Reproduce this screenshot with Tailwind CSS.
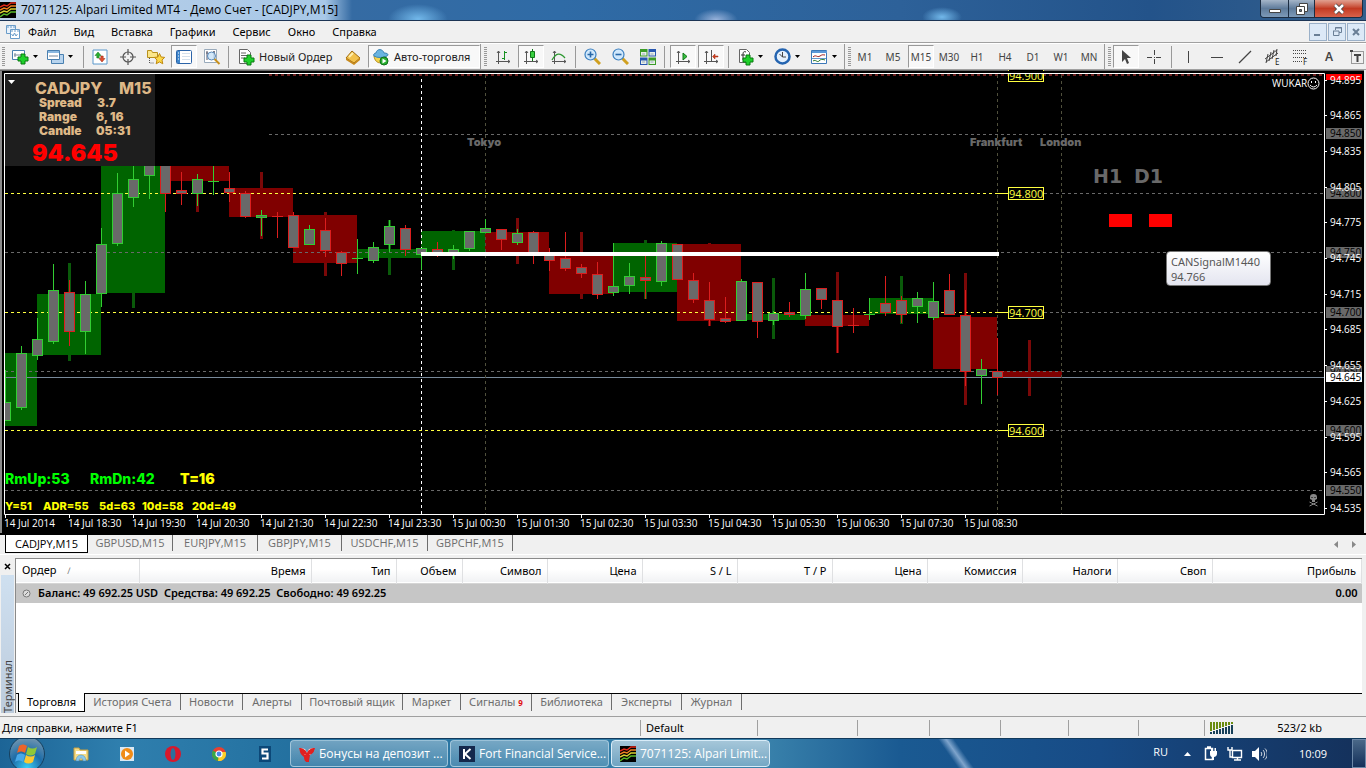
<!DOCTYPE html>
<html lang="ru">
<head>
    <meta charset="UTF-8">
    <meta name="viewport" content="width=device-width, initial-scale=1.0">
    <title>7071125: Alpari Limited MT4 - Демо Счет - [CADJPY,M15]</title>
    <script src="https://cdn.jsdelivr.net/npm/@tailwindcss/browser@4"></script>
</head>
<body class="h-screen flex flex-col overflow-hidden bg-[#f0f0f0] text-[11px] leading-4 text-black font-['Noto_Sans','Open_Sans',sans-serif]">

    <!-- Shared icons -->
    <svg class="hidden">
        <symbol id="plus" viewBox="0 0 12 12"><path d="M4 1h4v3h3v4H8v3H4V8H1V4h3z" fill="#1fd02b" stroke="#087a10"/></symbol>
        <symbol id="axes" viewBox="0 0 16 16"><path d="M3.500 2v13M1 12.500h14M2 4l1.500-2L5 4M13 11l2 1.500L13 14" fill="none" stroke="#555"/></symbol>
        <symbol id="logo" viewBox="0 0 16 16"><path d="M0 0h16v16H0z"/><path d="M0 5l4-2 3 1 4-3 5 0" stroke="#e02818" fill="none" stroke-width="1.500"/><path d="M0 8l4-2 3 1 4-3 5 0" stroke="#f08020" fill="none" stroke-width="1.500"/><path d="M0 11l4-2 3 1 4-3 5 0" stroke="#d8d030" fill="none" stroke-width="1.500"/><path d="M0 15l4-3 3 1 4-3 5 0" stroke="#58b828" fill="none" stroke-width="1.500"/></symbol>
    </svg>

    <!-- Title bar -->
    <header class="h-[21px] shrink-0 flex items-center border-b border-[#1c3454] bg-[radial-gradient(ellipse_at_center,#72b8ea_0,#72b8ea00_70%),radial-gradient(ellipse_at_center,#72b8ea_0,#72b8ea00_70%),radial-gradient(ellipse_at_center,#9ab4dc_0,#9ab4dc00_70%),linear-gradient(90deg,#b9cfe6_0,#a8c8e8_325px,#356ba3_352px,#2f6ba6_560px,#2d6199_900px,#23538a_1150px,#345f8c_100%)] bg-[size:60px_30px,40px_20px,44px_22px,100%_100%] bg-[position:388px_4px,922px_7px,694px_9px,0_0] bg-no-repeat">
        <svg class="size-4 shrink-0"><use href="#logo"/></svg>
        <h1 class="ml-[5px] text-[12px] whitespace-nowrap font-['Open_Sans','Noto_Sans',sans-serif]">7071125: Alpari Limited MT4 - Демо Счет - [CADJPY,M15]</h1>
        <div class="ml-auto mr-[3px] flex self-start h-[18px] border border-t-0 border-[#1b2c42] rounded-b-sm overflow-hidden">
            <button aria-label="Свернуть" class="w-7 flex justify-center items-center bg-linear-to-b from-[#a5b5c8] via-[#5f7b9b] to-[#7d9ab8] border-r border-[#1b2c42]"><svg class="w-3 h-3"><path d="M.5 6.500h11v3H.5z" fill="#fff" stroke="#444"/></svg></button>
            <button aria-label="Развернуть" class="w-[26px] flex justify-center items-center bg-linear-to-b from-[#a5b5c8] via-[#5f7b9b] to-[#7d9ab8] border-r border-[#1b2c42]"><svg class="w-3 h-3"><path d="M3.500.5h8v8h-8z" fill="#fff" stroke="#444"/><path d="M.5 3.500h8v8h-8z" fill="#fff" stroke="#444"/><path d="M3.500 6.500h2v2h-2z" fill="#678" stroke="#444"/></svg></button>
            <button aria-label="Закрыть" class="w-[47px] flex justify-center items-center bg-linear-to-b from-[#e0a090] via-[#c23a22] to-[#d8624a]"><svg class="w-3 h-3"><path d="M2 2l8 8M10 2l-8 8" stroke="#444" stroke-width="4"/><path d="M2 2l8 8M10 2l-8 8" stroke="#fff" stroke-width="2.500"/></svg></button>
        </div>
    </header>

    <!-- Menu -->
    <nav class="h-[22px] shrink-0 flex items-center pl-[5px] border-b border-[#a0a0a0]">
        <svg class="w-4 h-4"><path d="M1.500 1.500h9v8h-9z" fill="#e8f2fc" stroke="#6a9cc8"/><path d="M5.500 5.500h9v9h-9z" fill="#fff" stroke="#6a9cc8"/><path d="M2 3h8M6 7h8" stroke="#6a9cc8" stroke-dasharray="2 1"/><path d="M6.500 10l1.500 2 1.500-3 1.500 3 1.500-2" fill="none" stroke="#6a9cc8"/></svg>
        <div class="flex gap-[17px] pl-[7px]">
            <a href="#">Файл</a>
            <a href="#">Вид</a>
            <a href="#">Вставка</a>
            <a href="#">Графики</a>
            <a href="#">Сервис</a>
            <a href="#">Окно</a>
            <a href="#">Справка</a>
        </div>
        <div class="ml-auto mr-px flex gap-px">
            <button aria-label="Свернуть окно" class="size-[18px] border border-[#9ab0c8] bg-[#dce9f7]"><svg class="size-4"><path d="M4 10h6v2H4z" fill="#6a7f96"/></svg></button>
            <button aria-label="Восстановить окно" class="size-[18px] border border-[#9ab0c8] bg-[#dce9f7]"><svg class="size-4"><path d="M6.500 6V3.500h6v5H10M6 4h7M4 7h6v4.500H4.500V7" fill="none" stroke="#6a7f96"/></svg></button>
            <button aria-label="Закрыть окно" class="size-[18px] border border-[#9ab0c8] bg-[#dce9f7]"><svg class="size-4"><path d="M5 5l6 6M11 5l-6 6" stroke="#6a7f96" stroke-width="2"/></svg></button>
        </div>
    </nav>

    <!-- Toolbar -->
    <div class="h-[27px] shrink-0 flex items-center overflow-hidden pl-0.5 text-[#222] [&>*]:shrink-0 border-t border-white border-b border-b-[#a0a0a0]">
        <i class="w-[3px] h-[19px] bg-[repeating-linear-gradient(#999_0_1px,#f0f0f0_1px_2px)]"></i>
        <button aria-label="Новый график" class="w-[37px] flex items-center gap-1 pl-1.5"><svg class="w-[18px] h-[18px]"><path d="M1.500 2.500h12v9h-12z" fill="#fff" stroke="#4a80b0"/><path d="M3 7h8M4 5v4" stroke="#789"/><use href="#plus" x="6" y="5" width="12" height="12"/></svg><svg class="w-[5px] h-[3px]"><path d="M0 0h5L2.500 3z"/></svg></button>
        <button aria-label="Профили" class="w-[37px] flex items-center gap-1 pl-1"><svg class="w-[18px] h-[18px]"><path d="M5.500 6.500h12v9h-12z" fill="#b8d4ee" stroke="#4a80b0"/><path d="M1.500 2.500h12v9h-12z" fill="#fff" stroke="#4a80b0"/><path d="M2 4h11" stroke="#8ab8e0" stroke-width="2"/><path d="M3 8h9" stroke="#789"/></svg><svg class="w-[5px] h-[3px]"><path d="M0 0h5L2.500 3z"/></svg></button>
        <i class="w-px h-[22px] bg-[#999] ml-1 mr-0.5"></i>
        <button aria-label="Обзор рынка" class="w-7 flex justify-center"><svg class="size-4"><path d="M1 1h14v14H1z" fill="#fff" stroke="#5a98cc"/><path d="M6 3l3 3.500H7.200V9H4.800V6.500H3z" fill="#28b030" stroke="#187018" stroke-width=".5"/><path d="M10 13l3-3.500h-1.800V7H8.800v2.500H7z" fill="#e05030" stroke="#902010" stroke-width=".5"/></svg></button>
        <button aria-label="Окно данных" class="w-7 flex justify-center"><svg class="size-4"><circle cx="8" cy="8" r="5" fill="none" stroke="#555" stroke-width="1.200"/><path d="M8 0v6M8 10v6M0 8h6M10 8h6" stroke="#555" stroke-width="1.200"/></svg></button>
        <button aria-label="Навигатор" class="w-7 flex justify-center"><svg class="w-[18px] h-4"><path d="M.5 1.500h4l1 2h5v5H.5z" fill="#fbe68a" stroke="#b8901c"/><path d="M2.500 9v5h5" stroke="#555" stroke-dasharray="1 1" fill="none"/><path d="M12.500 4.500l1.600 3.500 3.600.4-2.700 2.600.8 3.800-3.300-1.900-3.300 1.900.8-3.800-2.700-2.600 3.600-.4z" fill="#fcd848" stroke="#c08a10"/></svg></button>
        <button aria-label="Терминал" class="w-[26px] mx-px h-[23px] flex justify-center items-center border border-[#999] border-r-white border-b-white bg-[#f8f8f8]"><svg class="size-4"><rect x=".5" y="1.500" width="15" height="13" rx="1" fill="#fff" stroke="#2c64a8"/><path d="M1 2h3v12H1z" fill="#3f86cc"/><path d="M6 4.500h8M6 7.500h8M6 10.500h8" stroke="#d4e0ec"/><path d="M2 4h1M2 7h1M2 10h1" stroke="#fff"/></svg></button>
        <button aria-label="Тестер" class="w-7 flex justify-center"><svg class="w-[18px] h-[18px]"><path d="M1.500 1.500h12v13h-12z" fill="#fff" stroke="#9ab"/><path d="M4 3v9M11 3v7M3 5h2M10 4h2" stroke="#556"/><circle cx="8.500" cy="8" r="4" fill="#c8e2f8cc" stroke="#5888b8"/><path d="M11.500 11l5 5" stroke="#c8901c" stroke-width="2"/></svg></button>
        <i class="w-px h-[22px] bg-[#999] ml-0.5 mr-2"></i>
        <button class="flex items-center gap-1 w-[103px] whitespace-nowrap"><svg class="w-[18px] h-[18px] shrink-0"><path d="M2.500 1.500h8l3 3v11h-11z" fill="#fff" stroke="#666"/><path d="M4 5h5M4 7.500h7M4 10h4" stroke="#666"/><use href="#plus" x="6" y="6" width="12" height="12"/></svg>Новый Ордер</button>
        <button aria-label="MetaEditor" class="w-[26px] flex justify-center"><svg class="size-4"><path d="M1 9l6-7 8 7-6 5z" fill="#f2c24c" stroke="#a06c10"/><path d="M1 9l8 5v2l-8-5zM9 14l6-5v2l-6 5z" fill="#c88a1c"/><path d="M4 8l4-4" stroke="#fff0b0" stroke-width="2"/></svg></button>
        <button class="ml-0.5 w-[112px] h-[23px] flex items-center gap-1 pl-0.5 whitespace-nowrap border border-[#999] border-r-white border-b-white bg-[#f8f8f8]"><svg class="w-[19px] h-[18px] shrink-0"><path d="M3 8c1 8 9 10 12 0z" fill="#f4d44c" stroke="#b08818"/><path d="M5 5c1-5 7-4 8 0 4 0 5 2 3 3-4 2-10 2-13 0-1-1 0-3 2-3z" fill="#6ab4e0" stroke="#3c84b4"/><circle cx="13" cy="13" r="4" fill="#28b030" stroke="#107018"/><path d="M11.500 10.500v5l4-2.500z" fill="#fff"/></svg>Авто-торговля</button>
        <i class="w-px h-[25px] bg-[#999] mr-[3px]"></i>
        <i class="w-[3px] h-[19px] bg-[repeating-linear-gradient(#999_0_1px,#f0f0f0_1px_2px)]"></i>
        <button aria-label="Бары" class="ml-0.5 w-7 flex justify-center"><svg class="size-4"><use href="#axes"/><path d="M9.500 2v9M9 3.500h3M7 9.500h3" stroke="#169020" fill="none"/></svg></button>
        <button aria-label="Свечи" class="w-[26px] mx-px h-[23px] flex justify-center items-center border border-[#999] border-r-white border-b-white bg-[#f8f8f8]"><svg class="size-4"><use href="#axes"/><path d="M9.500 0v12" stroke="#107818"/><path d="M7.500 2.500h4v6h-4z" fill="#38d040" stroke="#107818"/></svg></button>
        <button aria-label="Линия" class="w-7 flex justify-center"><svg class="size-4"><use href="#axes"/><path d="M1 11C5 4 9 3 14 9" stroke="#2c9830" stroke-width="1.300" fill="none"/></svg></button>
        <i class="w-px h-[22px] bg-[#999] mx-0.5"></i>
        <button aria-label="Увеличить" class="w-7 flex justify-center"><svg class="w-[17px] h-[17px]"><path d="M10 10l6 6" stroke="#d0a020" stroke-width="3"/><circle cx="6.500" cy="6.500" r="5.500" fill="#d0e8fc" stroke="#3c80c0" stroke-width="1.200"/><path d="M3.500 6.500h6M6.500 3.500v6" stroke="#2868a8" stroke-width="1.600"/></svg></button>
        <button aria-label="Уменьшить" class="w-7 flex justify-center"><svg class="w-[17px] h-[17px]"><path d="M10 10l6 6" stroke="#d0a020" stroke-width="3"/><circle cx="6.500" cy="6.500" r="5.500" fill="#d0e8fc" stroke="#3c80c0" stroke-width="1.200"/><path d="M3.500 6.500h6" stroke="#2868a8" stroke-width="1.600"/></svg></button>
        <button aria-label="Окна" class="w-7 flex justify-center"><svg class="size-4"><path d="M0 0h7.500v7.500H0zM8.500 8.500H16V16H8.500z" fill="#3c9c28"/><path d="M8.500 0H16v7.500H8.500zM0 8.500h7.500V16H0z" fill="#2858b0"/><path d="M1 3h5.500v3.500H1zM9.500 3H15v3.500H9.500zM1 11.500h5.500V15H1zM9.500 11.500H15V15H9.500z" fill="#e8f0e8"/><path d="M2 5h3M10.500 5h3M2 13h3M10.500 13h3" stroke="#9ab"/></svg></button>
        <i class="w-px h-[22px] bg-[#999] ml-0.5 mr-1"></i>
        <button aria-label="Автопрокрутка" class="w-[26px] mx-px h-[23px] flex justify-center items-center border border-[#999] border-r-white border-b-white bg-[#f8f8f8]"><svg class="size-4"><use href="#axes"/><path d="M8 4v7l4-3.500z" fill="#38c040" stroke="#107818"/></svg></button>
        <button aria-label="Сдвиг графика" class="w-[26px] mx-px h-[23px] flex justify-center items-center border border-[#999] border-r-white border-b-white bg-[#f8f8f8]"><svg class="size-4"><use href="#axes"/><path d="M8.500 1v11" stroke="#555"/><path d="M9.500 7.500L12 5v2h3v1h-3v2z" fill="#d04020" stroke="#a02810" stroke-width=".5"/></svg></button>
        <i class="w-px h-[22px] bg-[#999] ml-[3px] mr-1"></i>
        <button aria-label="Индикаторы" class="w-[37px] flex items-center gap-1 pl-1"><svg class="w-[17px] h-[18px]"><path d="M2.500 1.500h7l3 3v10h-10z" fill="#fff" stroke="#666"/><path d="M9 4c-2-1-3 0-3 2v6M4 7h4" stroke="#333" fill="none"/><use href="#plus" x="5" y="6" width="12" height="12"/></svg><svg class="w-[5px] h-[3px]"><path d="M0 0h5L2.500 3z"/></svg></button>
        <button aria-label="Периоды" class="w-[37px] flex items-center gap-1 pl-1"><svg class="w-[17px] h-[17px]"><circle cx="8.500" cy="8.500" r="7" fill="#e4f0fc" stroke="#2464b0" stroke-width="2.500"/><path d="M8.500 4v5h3.500M8.500 9l-3-3" stroke="#444" fill="none"/></svg><svg class="w-[5px] h-[3px]"><path d="M0 0h5L2.500 3z"/></svg></button>
        <button aria-label="Шаблоны" class="w-[37px] flex items-center gap-1 pl-1"><svg class="w-[17px] h-4"><path d="M.5 1.500h15v13H.5z" fill="#fff" stroke="#3c78b8"/><path d="M1 3h15" stroke="#5a98d8" stroke-width="2"/><path d="M2 8c3-3 4 1 7-1s3-1 5-1" stroke="#a02020" fill="none"/><path d="M2 12c3-2 4 2 6 0s3-2 6-1" stroke="#287828" fill="none"/><path d="M1 9.500h14" stroke="#69c"/></svg><svg class="w-[5px] h-[3px]"><path d="M0 0h5L2.500 3z"/></svg></button>
        <i class="w-px h-[25px] bg-[#999] mr-[3px]"></i>
        <i class="w-[3px] h-[19px] bg-[repeating-linear-gradient(#999_0_1px,#f0f0f0_1px_2px)]"></i>
        <div class="flex items-center text-[10px] text-[#444]">
            <button class="w-7">M1</button>
            <button class="w-7">M5</button>
            <button class="w-[26px] mx-px h-[23px] border border-[#999] border-r-white border-b-white bg-[#f8f8f8]">M15</button>
            <button class="w-7">M30</button>
            <button class="w-7">H1</button>
            <button class="w-7">H4</button>
            <button class="w-7">D1</button>
            <button class="w-7">W1</button>
            <button class="w-7">MN</button>
        </div>
        <i class="w-px h-[25px] bg-[#999] ml-px mr-[3px]"></i>
        <i class="w-[3px] h-[19px] bg-[repeating-linear-gradient(#999_0_1px,#f0f0f0_1px_2px)]"></i>
        <button aria-label="Курсор" class="w-[26px] ml-0.5 mr-px h-[23px] flex justify-center items-center border border-[#999] border-r-white border-b-white bg-[#f8f8f8]"><svg class="w-3 h-4"><path d="M2 1v12l3-3 2 5 2-1-2-5h4z" fill="#444"/></svg></button>
        <button aria-label="Перекрестие" class="w-7 flex justify-center"><svg class="size-4"><path d="M8.500 1v5M8.500 10v5M1 8.500h5M10 8.500h5" stroke="#444"/><path d="M8 8h1v1H8z" fill="#444"/></svg></button>
        <i class="w-px h-[22px] bg-[#999] mx-[3px]"></i>
        <button aria-label="Вертикальная линия" class="w-7 flex justify-center"><svg class="size-4"><path d="M7.500 2v12" stroke="#444"/></svg></button>
        <button aria-label="Горизонтальная линия" class="w-7 flex justify-center"><svg class="size-4"><path d="M2 8.500h12" stroke="#444"/></svg></button>
        <button aria-label="Трендовая линия" class="w-7 flex justify-center"><svg class="size-4"><path d="M2 14L14 2" stroke="#444" stroke-width="1.200"/></svg></button>
        <button aria-label="Каналы" class="w-7 flex justify-center"><svg class="w-[18px] h-[18px]"><path d="M1 11L13 2M2 14l12-9M4 6l-2 9M7 4L5 13M10 2l-2 9M13 1l-1 7" stroke="#444" fill="none"/><text x="11" y="17" font-size="8" fill="#222">E</text></svg></button>
        <button aria-label="Фибоначчи" class="w-7 flex justify-center"><svg class="w-[18px] h-[18px]"><path d="M1 2.500h14M1 5.500h14M1 9.500h14M1 13.500h9" stroke="#444" stroke-dasharray="1 1"/><text x="11" y="17" font-size="8" fill="#222">F</text></svg></button>
        <button aria-label="Текст" class="w-7 text-[12px] font-semibold text-[#444]">A</button>
        <button aria-label="Метка" class="w-7 flex justify-center"><svg class="size-4"><path d="M2.500 2.500h12v12h-12z" fill="none" stroke="#444" stroke-dasharray="1 1"/><path d="M1 1h3v2H1zM5 5h7v2H9.500v6h-2V7H5z" fill="#444"/></svg></button>
    </div>

    <!-- Chart -->
    <main class="relative shrink-0 bg-black">
        <svg id="chart" class="block w-full h-auto" viewBox="0 70 1366 463" font-family="'Open Sans','Noto Sans',sans-serif" font-size="10"></svg>
        <div class="absolute top-[181px] right-[95px] w-[105px] h-[35px] pl-1 pt-0.5 rounded-sm border border-[#767676] bg-linear-to-b from-white to-[#e4e5f0] text-[11px] leading-[15px] text-[#575757]">
            <p>CANSignalM1440</p>
            <p>94.766</p>
        </div>
    </main>

    <!-- Chart tabs -->
    <div class="h-[22px] shrink-0 flex items-start pl-[5px] pr-2 border-t-2 border-black text-[#6d6d6d] border-b border-b-white font-['Open_Sans','Noto_Sans',sans-serif]">
        <button class="w-[83px] h-[18px] bg-white text-black border border-t-0 border-black">CADJPY,M15</button>
        <button class="w-[85px] h-4 border-r border-[#6d6d6d]">GBPUSD,M15</button>
        <button class="w-[85px] h-4 border-r border-[#6d6d6d]">EURJPY,M15</button>
        <button class="w-[84px] h-4 border-r border-[#6d6d6d]">GBPJPY,M15</button>
        <button class="w-[86px] h-4 border-r border-[#6d6d6d]">USDCHF,M15</button>
        <button class="w-[85px] h-4 border-r border-[#6d6d6d]">GBPCHF,M15</button>
        <div class="ml-auto flex gap-3 pt-1.5">
            <button aria-label="Назад"><svg class="w-1.5 h-2"><path d="M4 0v7L0 3.500z" fill="#888"/></svg></button>
            <button aria-label="Вперед"><svg class="w-1.5 h-2"><path d="M0 0v7l4-3.500z" fill="#888"/></svg></button>
        </div>
    </div>

    <!-- Terminal -->
    <section class="flex-1 min-h-0 flex pt-[3px] pb-[3px]">
        <aside class="w-[15px] flex flex-col items-center">
            <button aria-label="Закрыть терминал" class="h-[17px]"><svg class="w-[7px] h-[7px]"><path d="M1 1l5 5M6 1L1 6" stroke="#000" stroke-width="1.500"/></svg></button>
            <div class="flex-1 w-[13px] flex items-start bg-linear-to-b from-[#bccbdc] to-[#cfe0f0] text-[#444] [writing-mode:vertical-rl] rotate-180 leading-[13px]">Терминал</div>
        </aside>
        <div class="flex-1 flex flex-col min-w-0 border-l border-t border-[#8a8a8a] mr-1">
            <div class="flex-1 bg-white border-b border-black">
                <table class="w-full table-fixed">
                    <colgroup>
                        <col class="w-[123px]"><col class="w-[172px]"><col class="w-[85px]"><col class="w-[66px]"><col class="w-[85px]"><col class="w-[95px]"><col class="w-[95px]"><col class="w-[95px]"><col class="w-[95px]"><col class="w-[95px]"><col class="w-[95px]"><col class="w-[95px]"><col>
                    </colgroup>
                    <thead>
                        <tr class="h-6 text-right bg-linear-to-b from-white from-45% to-[#f1f2f4] [&>th]:font-normal [&>th]:pr-[5px] [&>th]:border-r [&>th]:border-[#dfe0e2] border-b border-[#d5d5d5]">
                            <th class="text-left pl-1.5">Ордер <span class="ml-2 text-[#777] text-[9px]">∕</span></th>
                            <th>Время</th>
                            <th>Тип</th>
                            <th>Объем</th>
                            <th>Символ</th>
                            <th>Цена</th>
                            <th>S / L</th>
                            <th>T / P</th>
                            <th>Цена</th>
                            <th>Комиссия</th>
                            <th>Налоги</th>
                            <th>Своп</th>
                            <th>Прибыль</th>
                        </tr>
                    </thead>
                    <tbody>
                        <tr class="h-5 bg-[#c6c6c6] font-semibold">
                            <td colspan="12" class="pl-1.5"><span class="flex items-center gap-[7px] whitespace-pre"><svg class="size-[9px]"><circle cx="4.500" cy="4.500" r="3.500" fill="#ddd" stroke="#777"/><path d="M3 6l3-3" stroke="#777"/></svg>Баланс: 49 692.25 USD  Средства: 49 692.25  Свободно: 49 692.25</span></td>
                            <td class="text-right pr-1">0.00</td>
                        </tr>
                    </tbody>
                </table>
            </div>
            <div class="h-[19px] shrink-0 flex items-start pl-0.5 text-[#6d6d6d] [&>button]:whitespace-nowrap">
                <button class="-mt-px w-[67px] h-[19px] bg-white text-black border border-t-0 border-black">Торговля</button>
                <button class="w-24 border-r border-[#6d6d6d]">История Счета</button>
                <button class="w-[62px] border-r border-[#6d6d6d]">Новости</button>
                <button class="w-[59px] border-r border-[#6d6d6d]">Алерты</button>
                <button class="w-[101px] border-r border-[#6d6d6d]">Почтовый ящик</button>
                <button class="w-[58px] border-r border-[#6d6d6d]">Маркет</button>
                <button class="w-[71px] border-r border-[#6d6d6d]">Сигналы <b class="text-[8px] text-[#e01010]">9</b></button>
                <button class="w-20 border-r border-[#6d6d6d]">Библиотека</button>
                <button class="w-[70px] border-r border-[#6d6d6d]">Эксперты</button>
                <button class="w-[60px] border-r border-[#6d6d6d]">Журнал</button>
            </div>
        </div>
    </section>

    <!-- Status bar -->
    <footer class="h-[22px] shrink-0 flex items-center border-t border-[#a0a0a0] [&>*]:h-4 [&>*]:border-r [&>*]:border-[#a0a0a0]">
        <span class="flex-1 pl-0.5">Для справки, нажмите F1</span>
        <span class="w-[117px] pl-[5px]">Default</span>
        <span class="w-[100px]"></span>
        <span class="w-[72px]"></span>
        <span class="w-[71px]"></span>
        <span class="w-[68px]"></span>
        <span class="w-[70px]"></span>
        <span class="w-[66px]"></span>
        <div class="w-[161px] flex items-center pl-[5px] !border-r-0">
            <svg class="w-6 h-3"><path d="M1 0v9M4 0v8M7 0v7M10 0v6M13 0v5M16 0v4M19 0v3M22 0v2" stroke="#6a8c10" stroke-width="2"/><path d="M1 10v2M4 9v3M7 8v4M10 7v5M13 6v6M16 5v7M19 4v8M22 3v9" stroke="#184058" stroke-width="2"/></svg>
            <span class="ml-auto mr-11">523/2 kb</span>
        </div>
    </footer>

    <!-- Taskbar -->
    <div class="h-[30px] shrink-0 flex items-center overflow-hidden border-t border-[#123a5c] text-white bg-[linear-gradient(55deg,transparent_40%,#7ea4cc_50%,transparent_60%),linear-gradient(90deg,#1c6496_0,#2f7fae_120px,#23709f_300px,#3a83ac_760px,#1a5a92_900px,#174b86_1100px,#14305a_100%)] bg-[size:60px_100%,100%_100%] bg-[position:926px_0,0_0] bg-no-repeat font-['Open_Sans','Noto_Sans',sans-serif]">
        <button aria-label="Пуск" class="ml-2 w-[38px] shrink-0"><svg class="w-[38px] h-[38px]" viewBox="0 0 38 38"><defs><radialGradient id="orb" cx=".5" cy=".9" r=".9"><stop offset="0" stop-color="#38d0f8"/><stop offset=".5" stop-color="#1c6ca8"/><stop offset="1" stop-color="#7898b0"/></radialGradient></defs><circle cx="19" cy="19" r="17.500" fill="url(#orb)" stroke="#16405e"/><path d="M11 11c3-2 5-2 8 0l-2 7c-3-2-5-2-8 0z" fill="#ee6428"/><path d="M20 12c3 2 6 2 9 0l-2 7c-3 2-6 2-9 0z" fill="#90c838"/><path d="M9 20c3-2 5-2 8 0l-2 7c-3-2-5-2-8 0z" fill="#48a8e8"/><path d="M18 20c3 2 6 2 9 0l-2 7c-3 2-6 2-9 0z" fill="#fcc830"/></svg></button>
        <div class="flex ml-[27px] gap-[30px] shrink-0">
            <button aria-label="Проводник"><svg class="size-4"><path d="M1 2h5l1 2h8v10H1z" fill="#f4dc88" stroke="#c8a040"/><path d="M3 5h10v3H3z" fill="#fff"/><path d="M3 15c0-8 10-8 10 0h-3c0-4-4-4-4 0z" fill="#8cc8ec" stroke="#4888b0" stroke-width=".5"/></svg></button>
            <button aria-label="Проигрыватель"><svg class="size-4"><path d="M1 1h14v14H1z" fill="#d8e8f4"/><circle cx="8" cy="8" r="6" fill="#f08c18"/><path d="M6 4.500v7l5-3.500z" fill="#fff"/></svg></button>
            <button aria-label="Opera"><svg class="size-4"><ellipse cx="8" cy="8" rx="8" ry="8" fill="#d8182c"/><ellipse cx="8" cy="8" rx="2.500" ry="6" fill="#2a709c"/></svg></button>
            <button aria-label="Chrome"><svg class="size-4"><circle cx="8" cy="8" r="7" fill="#e84030"/><path d="M8 8L2 4.500A7 7 0 0 0 7 15z" fill="#38a848"/><path d="M8 8h0l-1 7a7 7 0 0 0 7.700-9H8z" fill="#fcd028"/><circle cx="8" cy="8" r="3" fill="#4888e8" stroke="#fff" stroke-width="1.200"/></svg></button>
            <button aria-label="S"><svg class="size-4"><path d="M2 0h12v16H2z" fill="#0c4878"/><path d="M11 3.500H5.500v4h5v5H5" fill="none" stroke="#fff" stroke-width="2.200"/></svg></button>
        </div>
        <div class="flex gap-0.5 ml-[17px] text-[12px] [&>button]:shrink-0">
            <button class="w-[158px] h-[27px] flex items-center gap-1 pl-2 whitespace-nowrap rounded-sm border border-[#bcd8e8]/70 bg-linear-to-b from-white/35 to-white/15"><svg class="size-4"><path d="M1 3l5 1 2 4 2-5 5-1c1 3-1 6-4 7l-1 6c-3 2-5 0-5-4C2 9 0 6 1 3z" fill="#e02020"/><path d="M1 2l5 1 2 4 2-4 5-1-4 7H6z" fill="#fff"/><path d="M0 2c4 0 7 2 8 5 1-3 4-5 8-5-1 4-4 6-6 7v7H7V9C4 8 1 6 0 2z" fill="#e02020"/></svg>Бонусы на депозит ...</button>
            <button class="w-[159px] h-[27px] flex items-center gap-1 pl-2 whitespace-nowrap rounded-sm border border-[#bcd8e8]/70 bg-linear-to-b from-white/35 to-white/15"><svg class="size-4"><path d="M0 0h16v16H0z" fill="#14284c"/><path d="M5 3v10M11.500 3L6 8l5.500 5" stroke="#fff" stroke-width="2" fill="none"/></svg>Fort Financial Service...</button>
            <button class="w-[159px] h-[27px] flex items-center gap-1 pl-2 whitespace-nowrap rounded-sm border border-[#d8ecf8] bg-linear-to-b from-white/55 to-white/30"><svg class="size-4"><use href="#logo"/></svg>7071125: Alpari Limit...</button>
        </div>
        <div class="ml-auto flex items-center shrink-0 self-stretch">
            <span class="mr-4 mb-1 text-[11px]">RU</span>
            <svg class="w-[7px] h-1 mr-3"><path d="M0 4h7L3.500 0z" fill="#fff"/></svg>
            <svg class="size-4 mr-2"><path d="M2.500 2.500h7v11h-7zM4 1h4" fill="none" stroke="#fff" stroke-width="1.500"/><path d="M7 5h7v3c0 2-2 3-3 3v3H9v-3c-1 0-2-1-2-3zM8 2h1.500v3H8zM11.500 2H13v3h-1.500z" fill="#fff"/></svg>
            <svg class="size-4 mr-2"><path d="M5.500 4.500h9v7h-9zM7 14h7M10.500 12v2M1 1v3h4V1M3 4v7h2" fill="none" stroke="#fff" stroke-width="1.400"/></svg>
            <svg class="size-4 mr-8"><path d="M1 5h3l4-4v14l-4-4H1z" fill="#fff"/><path d="M10 6c1 1 1 3 0 4M12 4c2 2 2 6 0 8M14 2.500c3 3 3 8 0 11" stroke="#fff" fill="none" stroke-width=".8"/></svg>
            <time class="text-[11px] mr-[25px]">10:09</time>
            <i class="w-3.5 self-stretch border border-[#6c88a8] bg-linear-to-b from-[#4a6888] to-[#14305a]"></i>
        </div>
    </div>

    <script>
        const svg = document.getElementById('chart');

        function add(tag, attrs, text) {
            const el = document.createElementNS('http://www.w3.org/2000/svg', tag);
            for (const key in attrs) el.setAttribute(key, attrs[key]);
            if (text) el.textContent = text;
            svg.appendChild(el);
            return el;
        }
        function rect(x1, y1, x2, y2, fill) {
            add('rect', { x: x1, y: y1, width: x2 - x1, height: y2 - y1, fill });
        }
        function line(x1, y1, x2, y2, stroke, dash) {
            const attrs = { x1, y1, x2, y2, stroke };
            if (dash) attrs['stroke-dasharray'] = '3 3';
            add('line', attrs);
        }
        function label(x, y, text, fill, size, family, weight) {
            const attrs = { x, y, fill };
            if (size) attrs['font-size'] = size;
            if (family) attrs['font-family'] = family;
            if (weight) attrs['font-weight'] = weight;
            add('text', attrs, text);
        }

        const GREEN = '#32cd32', RED = '#dc1e1e', DARK_GREEN = '#006400', DARK_RED = '#800000';
        const BLACK_FONT = 'Inter, sans-serif';

        // pane background
        rect(0, 70, 1366, 533, '#000');
        rect(0, 70, 2, 533, '#8a8a8a');
        rect(0, 70, 1366, 71, '#696969');
        rect(1364, 70, 1366, 533, '#e8e8e8');

        // hourly blocks: x1, top, x2, bottom, direction
        const hours = [
            [5, 353, 37, 426, 1], [37, 294, 101, 355, 1], [101, 166, 165, 293, 1], [165, 166, 229, 181, 0],
            [229, 188, 293, 217, 0], [293, 215, 357, 263, 0], [357, 249, 421, 258, 1], [421, 231, 485, 255, 1],
            [485, 232, 549, 253, 0], [549, 253, 613, 294, 0], [613, 243, 677, 292, 1], [677, 244, 741, 321, 0],
            [741, 314, 805, 320, 1], [805, 315, 869, 326, 0], [869, 298, 933, 314, 1], [933, 317, 997, 369, 0],
            [997, 371, 1062, 378, 0]
        ];
        // hourly shadows: x, high, low, direction
        const shadows = [
            [69, 263, 361, 1], [133, 170, 308, 1], [197, 170, 212, 0], [261, 172, 239, 0], [325, 212, 276, 0],
            [389, 220, 275, 1], [453, 230, 270, 1], [517, 218, 264, 0], [581, 232, 299, 0], [645, 240, 299, 1],
            [709, 243, 326, 0], [773, 278, 339, 1], [837, 272, 353, 0], [901, 276, 324, 1], [965, 273, 405, 0],
            [1029, 340, 396, 0]
        ];
        shadows.forEach(([x, hi, lo, up]) => rect(x - 1, hi, x + 2, lo, up ? '#0a5a0a' : '#7a0808'));
        hours.forEach(([x1, y1, x2, y2, up]) => rect(x1, y1, x2, y2, up ? DARK_GREEN : DARK_RED));

        // price grid
        line(269, 75, 1324, 75, '#dc4040', true);
        line(269, 134.5, 1324, 134.5, '#696969', true);
        [252.5, 371.5, 490.5].forEach(y => line(5, y, 1324, y, '#696969', true));
        [193.5, 312.5, 430.5].forEach(y => {
            line(1044, y, 1324, y, '#696969', true);
            line(5, y, 997, y, '#ffff40', true);
            line(997, y, 1008, y, '#ffff40');
        });
        line(5, 377.5, 1324, 377.5, '#778899');

        // session separators
        line(421.5, 79, 421.5, 514, '#fff', true);
        [485.5, 997.5, 1061.5].forEach(x => line(x, 75, x, 514, '#50503c', true));

        // 15 minute candles, one every 16px: high, body top, body bottom, low, direction
        const candles = [
            [370, 402, 420, 421, 1], [346, 353, 407, 410, 1], [318, 339, 355, 360, 1], [264, 290, 341, 344, 1],
            [280, 292, 331, 346, 0], [281, 294, 331, 354, 1], [228, 244, 293, 307, 1], [173, 193, 243, 246, 1],
            [160, 179, 197, 207, 1], [166, 165, 175, 199, 1], [166, 165, 193, 212, 0], [172, 190, 193, 205, 0],
            [174, 179, 193, 206, 1], [166, 181, 181, 195, 1], [172, 188, 192, 202, 0], [191, 193, 216, 218, 0],
            [210, 215, 217, 236, 1], [212, 216, 217, 238, 0], [212, 215, 247, 248, 0], [225, 229, 244, 245, 1],
            [218, 230, 250, 257, 0], [251, 252, 263, 276, 0], [239, 258, 258, 274, 1], [242, 247, 260, 263, 1],
            [220, 226, 244, 252, 1], [225, 228, 249, 256, 0], [248, 248, 254, 270, 1], [242, 249, 253, 257, 0],
            [245, 249, 253, 259, 1], [231, 231, 248, 251, 1], [219, 228, 232, 233, 1], [229, 229, 239, 250, 0],
            [229, 233, 242, 245, 1], [231, 232, 253, 264, 0], [248, 253, 260, 271, 0], [232, 258, 268, 271, 0],
            [264, 267, 273, 278, 0], [262, 274, 294, 299, 0], [243, 286, 292, 296, 1], [263, 276, 285, 294, 1],
            [256, 277, 280, 299, 0], [241, 243, 281, 286, 1], [244, 244, 279, 280, 0], [273, 280, 299, 303, 0],
            [282, 300, 319, 326, 0], [297, 318, 321, 323, 0], [279, 281, 320, 321, 1], [282, 282, 321, 338, 0],
            [311, 313, 320, 325, 1], [302, 312, 314, 317, 0], [273, 289, 315, 319, 1], [288, 288, 299, 309, 0],
            [300, 300, 326, 353, 0], [308, 325, 326, 333, 0], [298, 314, 314, 320, 1], [276, 303, 312, 316, 0],
            [296, 300, 314, 323, 0], [292, 298, 306, 323, 1], [282, 301, 317, 320, 1], [274, 290, 314, 315, 0],
            [290, 315, 371, 386, 0], [359, 369, 375, 404, 1], [338, 371, 377, 395, 0]
        ];
        candles.forEach(([hi, top, bottom, lo, up], i) => {
            const x = 5.5 + i * 16;
            const color = up ? GREEN : RED;
            line(x, hi, x, lo, color);
            if (bottom - top < 2) {
                line(x - 5.5, top + .5, x + 5.5, top + .5, color);
            } else {
                add('rect', { x: x - 5, y: top + .5, width: 10, height: bottom - top, fill: '#696969', stroke: color });
            }
        });

        rect(421, 252, 999, 256, '#fff');

        // info panel
        rect(155, 150, 240, 166, '#000');
        rect(5, 74, 155, 166, '#1e1e1e');
        add('path', { d: 'M8 80h7l-3.500 4z', fill: '#fff' });
        label(35, 94, 'CADJPY', '#deb887', 16, BLACK_FONT, 800);
        label(119, 94, 'M15', '#deb887', 16, BLACK_FONT, 800);
        label(39, 107, 'Spread', '#deb887', 12, BLACK_FONT, 900);
        label(97, 107, '3.7', '#deb887', 12, BLACK_FONT, 900);
        label(39, 121, 'Range', '#deb887', 12, BLACK_FONT, 900);
        label(96, 121, '6, 16', '#deb887', 12, BLACK_FONT, 900);
        label(39, 135, 'Candle', '#deb887', 12, BLACK_FONT, 900);
        label(96, 135, '05:31', '#deb887', 12, BLACK_FONT, 900);
        label(32, 161, '94.645', '#f00', 23, BLACK_FONT, 900);

        label(5, 484, 'RmUp:53', '#0f0', 14, BLACK_FONT, 800);
        label(90, 484, 'RmDn:42', '#0f0', 14, BLACK_FONT, 800);
        label(180, 484, 'T=16', '#ff0', 14, BLACK_FONT, 900);
        label(5, 510, 'Y=51', '#ff0', 11, BLACK_FONT, 800);
        label(43, 510, 'ADR=55', '#ff0', 11, BLACK_FONT, 800);
        label(99, 510, '5d=63', '#ff0', 11, BLACK_FONT, 800);
        label(142, 510, '10d=58', '#ff0', 11, BLACK_FONT, 800);
        label(192, 510, '20d=49', '#ff0', 11, BLACK_FONT, 800);

        // sessions and signals
        label(467, 146, 'Tokyo', '#696969', 11, BLACK_FONT, 900);
        label(970, 146, 'Frankfurt', '#696969', 11, BLACK_FONT, 900);
        label(1040, 146, 'London', '#696969', 11, BLACK_FONT, 900);
        label(1093, 183, 'H1', '#696969', 19, 'DejaVu Sans, sans-serif', 700);
        label(1134, 183, 'D1', '#696969', 19, 'DejaVu Sans, sans-serif', 700);
        rect(1109, 214, 1132, 227, '#f00');
        rect(1149, 214, 1172, 227, '#f00');
        label(1272, 87, 'WUKAR', '#fff', 10);
        add('circle', { cx: 1313.5, cy: 83.5, r: 5.5, fill: 'none', stroke: '#fff' });
        add('path', { d: 'M1311.500 81v2M1315.500 81v2M1310 85q3.500 4 7 0', fill: 'none', stroke: '#fff' });
        add('path', { d: 'M1310 497q0-3 3.500-3t3.500 3v2l-2 1v2h-3v-2l-2-1z', fill: '#888' });
        add('path', { d: 'M1311.500 497.500h1M1314.500 497.500h1', stroke: '#000' });
        add('path', { d: 'M1309.500 502l8 4M1317.500 502l-8 4', stroke: '#888' });

        // round level tags
        [[75, '94.900'], [193, '94.800'], [312, '94.700'], [430, '94.600']].forEach(([y, text]) => {
            add('rect', { x: 1008.5, y: y - 5.5, width: 35, height: 12, fill: '#000', stroke: '#ffff40' });
            label(1009, y + 5, text, '#ffff40', 11);
        });
        rect(1000, 71, 1050, 73, '#000');

        // frame
        rect(2, 75, 4, 514, '#000');
        rect(0, 400, 2, 424, '#8a8a8a');
        add('path', { d: 'M4.500 514.500V73.500H1324.500V514.500z', fill: 'none', stroke: '#fff' });

        // price axis
        rect(1326, 74, 1362, 80, '#f00');
        [[133, '94.850'], [193, '94.800'], [252, '94.750'], [312, '94.700'], [371, '94.650'], [430, '94.600'], [490, '94.550']].forEach(([y, text]) => {
            rect(1326, y - 5, 1362, y + 6, '#696969');
            label(1330, y + 4, text, '#000');
        });
        for (let i = 0; i < 13; i++) {
            const y = Math.round(79.5 + i * 35.7);
            line(1325, y + .5, 1327, y + .5, '#fff');
            label(1330, y + 4, (94.895 - i * 0.03).toFixed(3), '#fff');
        }
        rect(1326, 372, 1362, 382, '#fff');
        label(1330, 381, '94.645', '#000');

        // time axis
        ['14 Jul 2014', '14 Jul 18:30', '14 Jul 19:30', '14 Jul 20:30', '14 Jul 21:30', '14 Jul 22:30', '14 Jul 23:30',
            '15 Jul 00:30', '15 Jul 01:30', '15 Jul 02:30', '15 Jul 03:30', '15 Jul 04:30', '15 Jul 05:30', '15 Jul 06:30',
            '15 Jul 07:30', '15 Jul 08:30'].forEach((text, i) => {
            line(5.5 + i * 64, 515, 5.5 + i * 64, 518, '#fff');
            label(4 + i * 64, 527, text, '#fff');
        });
    </script>
</body>
</html>
